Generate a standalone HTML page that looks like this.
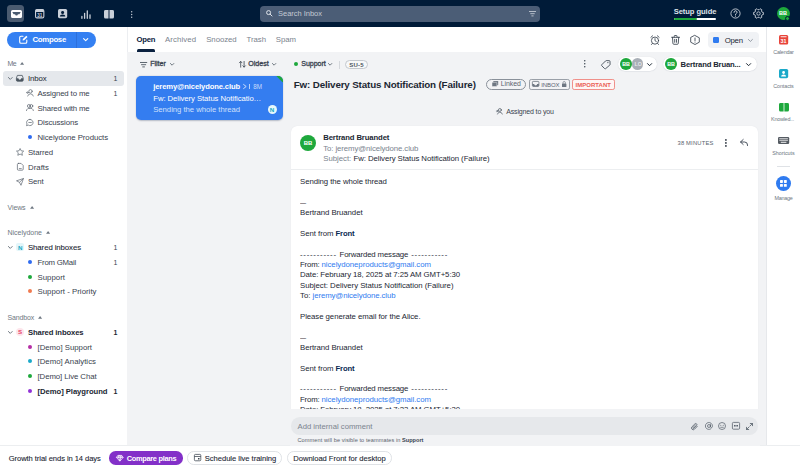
<!DOCTYPE html>
<html><head><meta charset="utf-8"><title>Front</title>
<style>
*{box-sizing:border-box;margin:0;padding:0}
html,body{width:800px;height:470px;overflow:hidden;background:#fff}
body{font-family:"Liberation Sans",sans-serif;color:#1c2733;position:relative;font-size:8.4px}
.a{position:absolute}
.t{position:absolute;white-space:nowrap;line-height:1;z-index:5}
svg{position:absolute;overflow:visible}
.dot{position:absolute;width:4.2px;height:4.2px;border-radius:50%}
.pill{position:absolute;border-radius:10px}

</style></head><body>
<!-- panels -->
<div class="a" style="left:0;top:0;width:800px;height:27px;background:#001b38"></div>
<div class="a" style="left:127px;top:27px;width:640px;height:419px;background:#f2f3f5"></div>
<div class="a" style="left:127px;top:27px;width:640px;height:24.700px;background:#fff;border-left:.8px solid #eceef1"></div>
<div class="a" style="left:766px;top:27px;width:1px;height:419px;background:#e6e8eb"></div>
<div class="a" style="left:767px;top:27px;width:33px;height:419px;background:#fff"></div>
<div class="a" style="left:0;top:445px;width:800px;height:25px;background:#fff;border-top:1px solid #eceef0"></div>

<!-- top bar -->
<div class="a" style="left:7px;top:5.3px;width:17px;height:17px;border-radius:3.5px;background:#4a5b70"></div>
<svg style="left:10.5px;top:10px" width="11" height="8" viewBox="0 0 11 8"><path d="M1.6 0h7.8a1.6 1.6 0 0 1 1.6 1.6v4.8A1.6 1.6 0 0 1 9.4 8H1.6A1.6 1.6 0 0 1 0 6.400V1.6A1.6 1.6 0 0 1 1.600 0z" fill="#fff"/><path d="M1.300 1.900h8.400l-1.300 2.300H6.900a1.400 1.400 0 0 1-2.800 0H2.600z" fill="#4a5b70"/></svg>
<svg style="left:34.700px;top:9.200px" width="9.400" height="9.400" viewBox="0 0 9.400 9.400"><rect x=".55" y=".55" width="8.300" height="8.300" rx="1.400" fill="none" stroke="#c9d0d9" stroke-width="1.100"/><path d="M.55 3V2A1.400 1.400 0 0 1 1.950.55H7.450A1.400 1.400 0 0 1 8.850 2V3z" fill="#c9d0d9"/><text x="4.700" y="7.700" font-family="Liberation Sans, sans-serif" font-size="4.600" font-weight="bold" fill="#c9d0d9" text-anchor="middle">31</text></svg>
<svg style="left:57.8px;top:9.3px" width="9.2" height="9.2" viewBox="0 0 9.2 9.2"><rect width="9.200" height="9.200" rx="1.600" fill="#c9d0d9"/><circle cx="4.600" cy="3.500" r="1.500" fill="#001b38"/><path d="M1.900 7.600a2.700 2.200 0 0 1 5.400 0z" fill="#001b38"/></svg>
<svg style="left:81px;top:9.5px" width="10" height="9" viewBox="0 0 10 9"><g stroke="#c9d0d9" stroke-width="1.300" stroke-linecap="round"><path d="M.9 6.500v1.800M3.600 3.300v5M6.300.8v7.500M9 4.800v3.500"/></g></svg>
<svg style="left:104px;top:9.700px" width="10" height="8.400" viewBox="0 0 10 8.400"><path d="M0 1.500A1.500 1.500 0 0 1 1.500 0H4.500V8.400H1.500A1.500 1.500 0 0 1 0 6.900z" fill="#c9d0d9"/><path d="M5.500 0H8.500A1.500 1.500 0 0 1 10 1.500V6.900A1.500 1.500 0 0 1 8.500 8.400H5.500z" fill="#c9d0d9"/></svg>
<svg style="left:131.400px;top:10.600px" width="1.400" height="7" viewBox="0 0 1.400 7"><circle cx=".7" cy=".7" r=".7" fill="#c9d0d9"/><circle cx=".7" cy="3.500" r=".7" fill="#c9d0d9"/><circle cx=".7" cy="6.300" r=".7" fill="#c9d0d9"/></svg>
<!-- search -->
<div class="a" style="left:259.5px;top:5.500px;width:280.5px;height:16.500px;border-radius:4px;background:#4b5d76"></div>
<svg style="left:266.300px;top:10.400px" width="6.400" height="6.400" viewBox="0 0 6.400 6.400"><circle cx="2.600" cy="2.600" r="2" fill="none" stroke="#dfe4ea" stroke-width="1"/><path d="M4.100 4.100L6 6" stroke="#dfe4ea" stroke-width="1" stroke-linecap="round"/></svg>
<svg style="left:528.500px;top:11px" width="7" height="5.400" viewBox="0 0 7 5.400"><g stroke="#c3cad4" stroke-width=".9" stroke-linecap="round"><path d="M.4.500h6.200M1.700 2.700h3.600M2.800 4.900h1.400"/></g></svg>
<!-- setup guide bar -->
<div class="a" style="left:673.700px;top:18.100px;width:42.700px;height:2.100px;border-radius:1px;background:#fff"></div>
<div class="a" style="left:673.700px;top:18.100px;width:23.500px;height:2.100px;border-radius:1px;background:#1eaa3c"></div>
<svg style="left:729.900px;top:8.100px" width="11" height="11" viewBox="0 0 11 11"><circle cx="5.500" cy="5.500" r="4.600" fill="none" stroke="#c9d0d9" stroke-width=".9"/><path d="M4 4.300a1.500 1.500 0 1 1 2.200 1.300c-.5.300-.7.600-.7 1.100" fill="none" stroke="#dfe4ea" stroke-width=".9" stroke-linecap="round"/><circle cx="5.500" cy="8.100" r=".55" fill="#dfe4ea"/></svg>
<svg style="left:753.300px;top:8px" width="11" height="11" viewBox="0 0 11 11"><path d="M9.03 4.10L10.39 4.46L10.39 6.54L9.03 6.90L8.48 7.86L8.85 9.22L7.05 10.26L6.06 9.26L4.94 9.26L3.95 10.26L2.15 9.22L2.52 7.86L1.97 6.90L0.61 6.54L0.61 4.46L1.97 4.10L2.52 3.14L2.15 1.78L3.95 0.74L4.94 1.74L6.06 1.74L7.05 0.74L8.85 1.78L8.48 3.14z" fill="none" stroke="#c9d0d9" stroke-width=".9" stroke-linejoin="round"/><circle cx="5.500" cy="5.500" r="1.700" fill="none" stroke="#c9d0d9" stroke-width=".85"/></svg>
<div class="a" style="left:776.800px;top:6.600px;width:13px;height:13px;border-radius:50%;background:#1eaa3c"></div>
<div class="a" style="left:785.200px;top:15.900px;width:5.200px;height:5.200px;border-radius:50%;background:#1eaa3c;border:1px solid #001b38;z-index:6"></div>

<!-- compose -->
<div class="a" style="left:7px;top:32px;width:89.300px;height:15.500px;border-radius:8px;background:#3480f2"></div>
<div class="a" style="left:76px;top:32px;width:.6px;height:15.500px;background:#2d70dc"></div>
<svg style="left:19.300px;top:35.300px" width="9" height="9" viewBox="0 0 9 9"><path d="M4 1.200H2A1.300 1.300 0 0 0 .7 2.500V7A1.300 1.300 0 0 0 2 8.300H6.500A1.300 1.300 0 0 0 7.800 7V5" fill="none" stroke="#fff" stroke-width="1.100" stroke-linecap="round"/><path d="M3.600 5.600l.3-1.500L7.300.7l1.200 1.200L5.100 5.300z" fill="#fff"/></svg>
<svg style="left:83px;top:38.200px" width="5.400" height="3.400" viewBox="0 0 5.400 3.400"><path d="M.6.600l2.100 2.100L4.800.6" fill="none" stroke="#fff" stroke-width="1.100" stroke-linecap="round" stroke-linejoin="round"/></svg>
<!-- sidebar -->
<div class="a" style="left:2.500px;top:71px;width:121.500px;height:14.500px;border-radius:3px;background:#e5e8ec"></div>
<svg style="left:8px;top:76.800px" width="4.600" height="3" viewBox="0 0 4.600 3"><path d="M.4.500l1.900 1.900L4.200.5" fill="none" stroke="#4a5560" stroke-width=".8" stroke-linecap="round" stroke-linejoin="round"/></svg>
<svg style="left:8px;top:245.800px" width="4.600" height="3" viewBox="0 0 4.600 3"><path d="M.4.500l1.900 1.900L4.200.5" fill="none" stroke="#4a5560" stroke-width=".8" stroke-linecap="round" stroke-linejoin="round"/></svg>
<svg style="left:8px;top:330.500px" width="4.600" height="3" viewBox="0 0 4.600 3"><path d="M.4.500l1.900 1.900L4.200.5" fill="none" stroke="#4a5560" stroke-width=".8" stroke-linecap="round" stroke-linejoin="round"/></svg>
<!-- inbox tray icon -->
<svg style="left:16.300px;top:75px" width="7.600" height="6.600" viewBox="0 0 7.600 6.600"><path d="M1.400.4h4.800l1 2.700v2.100a1 1 0 0 1-1 1H1.400a1 1 0 0 1-1-1V3.100z" fill="none" stroke="#4a5560" stroke-width=".8" stroke-linejoin="round"/><path d="M.4 3.300h2a1.400 1.400 0 0 0 2.800 0h2v2a1 1 0 0 1-1 1H1.400a1 1 0 0 1-1-1z" fill="#4a5560"/></svg>
<!-- assigned icon -->
<svg style="left:25.800px;top:89.300px" width="7.600" height="7.400" viewBox="0 0 7.600 7.400"><g fill="none" stroke="#5a636e" stroke-width=".7" stroke-linecap="round" stroke-linejoin="round"><circle cx="4.500" cy="2.300" r="1.700"/><path d="M1.700 7a2.900 2.900 0 0 1 5.600 0M.4 3.600h2M1.600 2.700l.9.900-.9.900"/></g></svg>
<!-- shared icon -->
<svg style="left:25.800px;top:104.300px" width="7.800" height="7" viewBox="0 0 7.800 7"><g fill="none" stroke="#5a636e" stroke-width=".7" stroke-linecap="round" stroke-linejoin="round"><circle cx="2.900" cy="2" r="1.500"/><circle cx="5.300" cy="2" r="1.500"/><path d="M.4 6.600a2.500 2.500 0 0 1 3.500-2.200M7.400 6.600a2.500 2.500 0 0 0-3.500-2.200"/></g></svg>
<!-- discussions -->
<svg style="left:25.800px;top:119px" width="7.600" height="7.200" viewBox="0 0 7.600 7.200"><g fill="none" stroke="#5a636e" stroke-width=".7" stroke-linecap="round" stroke-linejoin="round"><path d="M4 .4a3.100 3.100 0 1 1-1.700 5.700L.5 6.700l.5-1.700A3.100 3.100 0 0 1 4 .4z"/><path d="M2.800 3.500h2.600"/></g></svg>
<div class="dot" style="left:27.500px;top:135px;background:#2f6bf0"></div>
<!-- star -->
<svg style="left:15.800px;top:147.800px" width="8.200" height="8" viewBox="0 0 8.200 8"><path d="M4.100.5l1.100 2.300 2.500.3-1.800 1.700.5 2.500-2.300-1.200-2.300 1.200.5-2.500L.5 3.100l2.500-.3z" fill="none" stroke="#5a636e" stroke-width=".7" stroke-linejoin="round"/></svg>
<!-- drafts -->
<svg style="left:16.500px;top:163px" width="6.600" height="7.600" viewBox="0 0 6.600 7.600"><g fill="none" stroke="#5a636e" stroke-width=".7" stroke-linejoin="round" stroke-linecap="round"><path d="M1.400.4h2.700l2.100 2.100v3.700a1 1 0 0 1-1 1H1.400a1 1 0 0 1-1-1V1.400a1 1 0 0 1 1-1z"/><path d="M2.300 5.600h2"/></g></svg>
<!-- sent -->
<svg style="left:15.800px;top:177.800px" width="8" height="7.800" viewBox="0 0 8 7.800"><path d="M.5 2.800L7.500.5 5 7.300 3.500 4.300zM3.500 4.300L7.500.5" fill="none" stroke="#5a636e" stroke-width=".7" stroke-linejoin="round"/></svg>
<!-- section carets -->
<svg style="left:19.8px;top:62.2px" width="4.200" height="2.700" viewBox="0 0 3.600 2.400"><path d="M0 2.400L1.800 0l1.800 2.400z" fill="#6e7782"/></svg>
<svg style="left:29.8px;top:205.9px" width="4.200" height="2.700" viewBox="0 0 3.600 2.400"><path d="M0 2.400L1.800 0l1.800 2.400z" fill="#6e7782"/></svg>
<svg style="left:45.8px;top:231.2px" width="4.200" height="2.700" viewBox="0 0 3.600 2.400"><path d="M0 2.400L1.800 0l1.800 2.400z" fill="#6e7782"/></svg>
<svg style="left:37.8px;top:315.9px" width="4.200" height="2.700" viewBox="0 0 3.600 2.400"><path d="M0 2.400L1.800 0l1.800 2.400z" fill="#6e7782"/></svg>
<!-- N / S badges -->
<div class="a" style="left:16px;top:243.300px;width:8px;height:8px;border-radius:2px;background:#e3f6fa"></div>
<div class="a" style="left:16px;top:328px;width:8px;height:8px;border-radius:50%;background:#fde6ec"></div>
<!-- dots -->
<div class="dot" style="left:27.500px;top:259.700px;background:#2f6bf0"></div>
<div class="dot" style="left:27.500px;top:274.500px;background:#1ea83c"></div>
<div class="dot" style="left:27.500px;top:289.200px;background:#f07a50"></div>
<div class="dot" style="left:27.500px;top:344.500px;background:#b52fa5"></div>
<div class="dot" style="left:27.500px;top:359.200px;background:#1ba9c9"></div>
<div class="dot" style="left:27.500px;top:373.900px;background:#1ea83c"></div>
<div class="dot" style="left:27.500px;top:388.700px;background:#9232d6"></div>

<!-- tabs -->
<div class="a" style="left:136.500px;top:49.300px;width:18.800px;height:2.400px;border-radius:1.500px 1.500px 0 0;background:#0b2140"></div>
<!-- alarm -->
<svg style="left:650px;top:35px" width="10" height="10" viewBox="0 0 10 10"><g fill="none" stroke="#38424e" stroke-width=".85" stroke-linecap="round" stroke-linejoin="round"><circle cx="5" cy="5.600" r="3.600"/><path d="M5 3.600v2.100l1.300.8M.9 2.300L2.600.8M9.100 2.300L7.400.8M2.300 8.600l-.8.900M7.700 8.600l.8.900"/></g></svg>
<!-- trash -->
<svg style="left:671px;top:34.800px" width="9.200" height="9.800" viewBox="0 0 9.200 9.800"><g fill="none" stroke="#38424e" stroke-width=".85" stroke-linecap="round" stroke-linejoin="round"><path d="M.6 2.300h8M3.200 2.300V1.100a.6.600 0 0 1 .6-.6h1.600a.6.600 0 0 1 .6.600v1.200M1.500 2.300l.4 6a1 1 0 0 0 1 1h3.400a1 1 0 0 0 1-1l.4-6M3.700 4.300v3M5.500 4.300v3"/></g></svg>
<!-- hex ! -->
<svg style="left:690.400px;top:34.800px" width="10" height="10" viewBox="0 0 10 10"><g fill="none" stroke="#38424e" stroke-width=".85" stroke-linecap="round" stroke-linejoin="round"><path d="M5 .5l4.300 2.300v4.400L5 9.500.7 7.200V2.800z"/><path d="M5 3v2.600"/></g><circle cx="5" cy="7" r=".55" fill="#38424e"/></svg>
<!-- open button -->
<div class="a" style="left:707.500px;top:32px;width:51.500px;height:15.600px;border-radius:4px;background:#f0f2f5"></div>
<div class="a" style="left:712.800px;top:36.800px;width:6.200px;height:6.200px;border-radius:1.200px;background:#2f7bf0"></div>
<svg style="left:748.300px;top:38.600px" width="4.800" height="3" viewBox="0 0 4.800 3"><path d="M.4.500l2 1.900 2-1.900" fill="none" stroke="#7a838e" stroke-width=".8" stroke-linecap="round" stroke-linejoin="round"/></svg>

<!-- list header -->
<svg style="left:140px;top:61.800px" width="7.200" height="5.400" viewBox="0 0 7.200 5.400"><g stroke="#38424e" stroke-width=".8" stroke-linecap="round"><path d="M.4.500h6.400M1.500 2.700h4.200M2.700 4.900h1.800"/></g></svg>
<svg style="left:170px;top:63.200px" width="4.200" height="2.800" viewBox="0 0 4.200 2.800"><path d="M.4.500l1.700 1.700L3.800.5" fill="none" stroke="#4a5560" stroke-width=".8" stroke-linecap="round" stroke-linejoin="round"/></svg>
<svg style="left:238.600px;top:61.200px" width="6.800" height="6.600" viewBox="0 0 6.800 6.600"><g fill="none" stroke="#38424e" stroke-width=".8" stroke-linecap="round" stroke-linejoin="round"><path d="M1.700 6.200V.5M.4 1.800L1.700.5 3 1.800M5.100.4v5.700M3.800 4.800l1.300 1.300 1.300-1.300"/></g></svg>
<svg style="left:272.400px;top:63.200px" width="4.200" height="2.800" viewBox="0 0 4.200 2.800"><path d="M.4.500l1.700 1.700L3.800.5" fill="none" stroke="#4a5560" stroke-width=".8" stroke-linecap="round" stroke-linejoin="round"/></svg>
<!-- card -->
<div class="a" style="left:135.600px;top:75.800px;width:147px;height:44px;border-radius:5px;background:#347df0;overflow:hidden;box-shadow:0 .5px 1.500px rgba(0,20,60,.25)"><div class="a" style="right:-4.500px;top:-4.500px;width:9px;height:9px;background:#1ea83c;transform:rotate(45deg) scale(1.050)"></div></div>
<svg style="left:242.600px;top:83.800px" width="4" height="5" viewBox="0 0 4 5"><path d="M.6.500l2.600 2-2.600 2" fill="none" stroke="#dbe8fd" stroke-width=".9" stroke-linecap="round" stroke-linejoin="round"/></svg>
<div class="a" style="left:249px;top:83.600px;width:.7px;height:5.400px;background:#b9d2fa"></div>
<div class="a" style="left:267.500px;top:105.300px;width:9px;height:9px;border-radius:50%;background:#e6f7fb"></div>

<!-- conv header -->
<div class="dot" style="left:293.600px;top:62.300px;width:4.200px;height:4.200px;background:#1ea83c"></div>
<svg style="left:328.200px;top:63.200px" width="4.200" height="2.800" viewBox="0 0 4.200 2.800"><path d="M.4.500l1.700 1.700L3.800.5" fill="none" stroke="#4a5560" stroke-width=".8" stroke-linecap="round" stroke-linejoin="round"/></svg>
<div class="a" style="left:338.500px;top:60.500px;width:.7px;height:8.300px;background:#d5d8dc"></div>
<div class="a" style="left:345px;top:60px;width:22.600px;height:9.300px;border-radius:5px;border:.7px solid #c3c8ce;background:#f7f8f9"></div>
<!-- chips -->
<div class="a" style="left:486.100px;top:78.600px;width:39.800px;height:11px;border-radius:5.500px;border:.7px solid #8a919a"></div>
<svg style="left:492px;top:81.300px" width="6.200" height="5.600" viewBox="0 0 6.200 5.600"><rect x="1.300" y="0" width="4.900" height="4.300" rx=".6" fill="#6e7782"/><rect x="0" y="1.300" width="4.900" height="4.300" rx=".6" fill="#6e7782" stroke="#f2f3f5" stroke-width=".5"/></svg>
<div class="a" style="left:529.300px;top:78.600px;width:40.500px;height:11px;border-radius:2.200px;border:.7px solid #9aa0a8"></div>
<svg style="left:532px;top:81.200px" width="7.300" height="5.800" viewBox="0 0 7.300 5.800"><rect x=".4" y=".4" width="6.500" height="5" rx=".8" fill="none" stroke="#6e7782" stroke-width=".8"/><path d="M.4 3h1.800a1.450 1.450 0 0 0 2.900 0h1.800v1.600a.8.8 0 0 1-.8.800H1.200a.8.800 0 0 1-.8-.8z" fill="#6e7782"/></svg>
<svg style="left:562px;top:80.800px" width="4.400" height="6" viewBox="0 0 4.400 6"><rect x="0" y="2.500" width="4.400" height="3.500" rx=".6" fill="#6e7782"/><path d="M1 2.700V1.700a1.200 1.200 0 0 1 2.400 0v1" fill="none" stroke="#6e7782" stroke-width=".7"/></svg>
<div class="a" style="left:572px;top:78.600px;width:42.700px;height:11px;border-radius:2.200px;border:.7px solid #f0908a;background:#fef6f5"></div>
<!-- dots / tag -->
<svg style="left:584.300px;top:60.300px" width="1.500" height="7.600" viewBox="0 0 1.500 7.600"><circle cx=".75" cy=".75" r=".75" fill="#38424e"/><circle cx=".75" cy="3.800" r=".75" fill="#38424e"/><circle cx=".75" cy="6.850" r=".75" fill="#38424e"/></svg>
<svg style="left:600.500px;top:59.800px" width="9.600" height="9.200" viewBox="0 0 9.600 9.200"><path d="M5.300.6l3.100.100a.6.600 0 0 1 .6.600l.1 3.100a1 1 0 0 1-.3.700L4.700 8.600a.8.800 0 0 1-1.100 0L.8 5.800a.8.800 0 0 1 0-1.100L4.600.9a1 1 0 0 1 .7-.3z" fill="none" stroke="#38424e" stroke-width=".85" stroke-linejoin="round"/><circle cx="6.900" cy="2.600" r=".6" fill="#38424e"/></svg>
<!-- assignee pills -->
<div class="a" style="left:618.300px;top:56.800px;width:38.800px;height:14.400px;border-radius:7.200px;background:#fff;box-shadow:0 .3px 1px rgba(0,20,60,.18)"></div>
<div class="a" style="left:631.500px;top:58.100px;width:11.800px;height:11.800px;border-radius:50%;background:#a9afb7"></div>
<div class="a" style="left:620px;top:58.100px;width:11.800px;height:11.800px;border-radius:50%;background:#1ea83c"></div>
<svg style="left:646.700px;top:62.600px" width="5.200" height="3.400" viewBox="0 0 5.200 3.400"><path d="M.5.600l2.100 2.100L4.700.6" fill="none" stroke="#1c2733" stroke-width="1" stroke-linecap="round" stroke-linejoin="round"/></svg>
<div class="a" style="left:663.300px;top:56.800px;width:94.200px;height:14.400px;border-radius:7.200px;background:#fff;box-shadow:0 .3px 1px rgba(0,20,60,.18)"></div>
<div class="a" style="left:665px;top:58.100px;width:11.800px;height:11.800px;border-radius:50%;background:#1ea83c"></div>
<svg style="left:746.400px;top:62.600px" width="5.200" height="3.400" viewBox="0 0 5.200 3.400"><path d="M.5.600l2.100 2.100L4.700.6" fill="none" stroke="#1c2733" stroke-width="1" stroke-linecap="round" stroke-linejoin="round"/></svg>
<!-- assigned to you icon -->
<svg style="left:496.200px;top:107.600px" width="6.600" height="6.400" viewBox="0 0 7.600 7.400"><g fill="none" stroke="#4a5560" stroke-width=".8" stroke-linecap="round" stroke-linejoin="round"><circle cx="4.500" cy="2.300" r="1.700"/><path d="M1.700 7a2.900 2.900 0 0 1 5.600 0M.4 3.600h2M1.600 2.700l.9.900-.9.900"/></g></svg>

<!-- message card -->
<div class="a" style="left:291.300px;top:126px;width:467px;height:282.800px;border-radius:6px 6px 0 0;background:#fff;box-shadow:0 .3px 1px rgba(0,20,60,.10)"></div>
<div class="a" style="left:291.300px;top:169.200px;width:466.900px;height:.7px;background:#eceef0"></div>
<div class="a" style="left:300px;top:134.600px;width:16px;height:16px;border-radius:50%;background:#1ea83c"></div>
<svg style="left:725.300px;top:138.900px" width="1.800" height="7.800" viewBox="0 0 1.800 7.800"><circle cx=".9" cy=".9" r=".9" fill="#2a333e"/><circle cx=".9" cy="3.900" r=".9" fill="#2a333e"/><circle cx=".9" cy="6.900" r=".9" fill="#2a333e"/></svg>
<svg style="left:739.800px;top:139.300px" width="8" height="7" viewBox="0 0 8 7"><path d="M3.200.5L.5 3l2.700 2.500M.7 3h3.800a3 3 0 0 1 3 3v.5" fill="none" stroke="#38424e" stroke-width=".9" stroke-linecap="round" stroke-linejoin="round"/></svg>
<!-- mask under card (clip last line) -->
<div class="a" style="left:290px;top:408.800px;width:470px;height:37px;background:#f2f3f5;z-index:7"></div>
<!-- composer -->
<div class="a" style="left:291.300px;top:417px;width:467.200px;height:17.500px;border-radius:8.750px;background:#e6e8eb;z-index:8"></div>
<svg style="left:691.200px;top:422.500px;z-index:9" width="7.200" height="7.400" viewBox="0 0 7.200 7.400"><path d="M6.300 3.300L3.500 6.200a1.700 1.700 0 0 1-2.500-2.400L3.900.9a1.150 1.150 0 0 1 1.700 1.600L2.800 5.300a.55.55 0 0 1-.8-.8l2.500-2.500" fill="none" stroke="#5a636e" stroke-width=".85" stroke-linecap="round"/></svg>
<svg style="left:704.500px;top:422px;z-index:9" width="8" height="8" viewBox="0 0 8 8"><g fill="none" stroke="#5a636e" stroke-width=".75" stroke-linecap="round"><circle cx="4" cy="4" r="1.500"/><path d="M5.500 2.600v2a.9.900 0 0 0 1.900-.1V4a3.500 3.500 0 1 0-1.400 2.800"/></g></svg>
<svg style="left:718.200px;top:422px;z-index:9" width="8" height="8" viewBox="0 0 8 8"><circle cx="4" cy="4" r="3.500" fill="none" stroke="#5a636e" stroke-width=".75"/><circle cx="2.800" cy="3.200" r=".5" fill="#5a636e"/><circle cx="5.200" cy="3.200" r=".5" fill="#5a636e"/><path d="M2.700 5.300h2.600" stroke="#5a636e" stroke-width=".7" stroke-linecap="round"/></svg>
<svg style="left:732px;top:422.200px;z-index:9" width="8" height="7.600" viewBox="0 0 8 7.600"><rect x=".4" y=".4" width="7.200" height="6.800" rx="1" fill="none" stroke="#5a636e" stroke-width=".8"/><path d="M2 3.800h4" stroke="#5a636e" stroke-width="1.400" stroke-dasharray="1.100 .35"/></svg>
<svg style="left:746.300px;top:422.600px;z-index:9" width="7" height="7" viewBox="0 0 7 7"><g fill="none" stroke="#5a636e" stroke-width=".85" stroke-linecap="round" stroke-linejoin="round"><path d="M4.300.5h2.200v2.200M6.500.5L4 3M2.700 6.500H.5V4.300M.5 6.500L3 4"/></g></svg>

<!-- bottom bar -->
<div class="a" style="left:109.300px;top:451.200px;width:74px;height:13.400px;border-radius:6.700px;background:#8330c8;z-index:8"></div>
<svg style="left:116.300px;top:454.600px;z-index:9" width="7.600" height="6.600" viewBox="0 0 7.600 6.600"><path d="M2 .4h3.600l1.600 2-3.400 3.800L.4 2.400zM.4 2.400h6.800M2.700 2.400l1.100 3.600 1.100-3.600M2 .4l.7 2L3.800.4l1.100 2 .7-2" fill="none" stroke="#fff" stroke-width=".75" stroke-linejoin="round"/></svg>
<div class="a" style="left:187.400px;top:451.200px;width:95px;height:13.400px;border-radius:6.700px;border:.8px solid #dfe2e6;background:#fff;z-index:8"></div>
<svg style="left:194.300px;top:454.200px;z-index:9" width="7.200" height="7.200" viewBox="0 0 7.200 7.200"><rect x=".4" y=".4" width="6.400" height="6.400" rx="1" fill="none" stroke="#38424e" stroke-width=".75"/><path d="M.4 2.500h6.400" stroke="#38424e" stroke-width=".75"/><rect x="4" y="4" width="1.500" height="1.500" fill="#38424e"/></svg>
<div class="a" style="left:286.700px;top:451.200px;width:105.600px;height:13.400px;border-radius:6.700px;border:.8px solid #dfe2e6;background:#fff;z-index:8"></div>

<!-- right rail -->
<svg style="left:779px;top:35px" width="9.200" height="9.500" viewBox="0 0 9.200 9.500"><rect width="9.200" height="9.500" rx="1.500" fill="#e8443a"/><rect x="1.600" y="1.200" width="6" height="1" rx=".3" fill="#fff" opacity=".9"/><text x="4.600" y="8" font-family="Liberation Sans, sans-serif" font-size="5.400" font-weight="bold" fill="#fff" text-anchor="middle">31</text></svg>
<svg style="left:779px;top:69px" width="9.200" height="9.200" viewBox="0 0 9.200 9.200"><rect width="9.200" height="9.200" rx="1.600" fill="#1ba9c9"/><circle cx="4.600" cy="3.500" r="1.400" fill="#fff"/><path d="M2.100 7.400a2.500 2 0 0 1 5 0z" fill="#fff"/></svg>
<svg style="left:778.600px;top:102.500px" width="10" height="8.600" viewBox="0 0 10 8.600"><path d="M0 1.500A1.500 1.500 0 0 1 1.500 0H4.600V8.600H1.500A1.500 1.500 0 0 1 0 7.100z" fill="#1ea83c"/><path d="M5.400 0H8.500A1.500 1.500 0 0 1 10 1.500V7.100A1.500 1.500 0 0 1 8.500 8.600H5.400z" fill="#1ea83c"/></svg>
<svg style="left:778px;top:137px" width="11.200" height="7" viewBox="0 0 11.200 7"><rect width="11.200" height="7" rx="1.200" fill="#555b62"/><g fill="#fff"><rect x="1.300" y="1.300" width="8.600" height="1" opacity=".85"/><rect x="1.300" y="3" width="8.600" height="1" opacity=".6"/><rect x="2.800" y="4.800" width="5.600" height="1" opacity=".9"/></g></svg>
<div class="a" style="left:777.400px;top:166px;width:12.400px;height:.7px;background:#dfe2e6"></div>
<div class="a" style="left:775.900px;top:175.700px;width:15.500px;height:15.500px;border-radius:50%;background:#2f7bf0"></div>
<svg style="left:780.300px;top:180.100px" width="6.800" height="6.800" viewBox="0 0 6.800 6.800"><g fill="#fff"><rect width="2.900" height="2.900" rx=".6"/><rect x="3.900" width="2.900" height="2.900" rx=".6"/><rect y="3.900" width="2.900" height="2.900" rx=".6"/><rect x="3.900" y="3.900" width="2.900" height="2.900" rx=".6"/></g></svg>

<span class="t" style="left:32.4px;top:36.40px;font-size:7.8px;font-weight:bold;color:#fff;letter-spacing:-0.276px;">Compose</span>
<span class="t" style="left:7.5px;top:60.20px;font-size:7px;color:#6e7782;letter-spacing:-0.500px;">Me</span>
<span class="t" style="left:28px;top:75.00px;font-size:7.8px;color:#1c2733;letter-spacing:-0.116px;">Inbox</span>
<span class="t" style="right:682.50px;top:75.40px;font-size:7px;color:#38424e;">1</span>
<span class="t" style="left:37.5px;top:89.70px;font-size:7.8px;color:#38424e;letter-spacing:-0.125px;">Assigned to me</span>
<span class="t" style="right:682.50px;top:90.10px;font-size:7px;color:#38424e;">1</span>
<span class="t" style="left:37.5px;top:104.50px;font-size:7.8px;color:#38424e;letter-spacing:-0.155px;">Shared with me</span>
<span class="t" style="left:37.5px;top:119.20px;font-size:7.8px;color:#38424e;letter-spacing:-0.101px;">Discussions</span>
<span class="t" style="left:37.5px;top:134.00px;font-size:7.8px;color:#38424e;letter-spacing:-0.053px;">Nicelydone Products</span>
<span class="t" style="left:28px;top:148.70px;font-size:7.8px;color:#38424e;letter-spacing:-0.083px;">Starred</span>
<span class="t" style="left:28px;top:163.50px;font-size:7.8px;color:#38424e;letter-spacing:0.034px;">Drafts</span>
<span class="t" style="left:28px;top:178.30px;font-size:7.8px;color:#38424e;letter-spacing:-0.137px;">Sent</span>
<span class="t" style="left:7.5px;top:203.90px;font-size:7px;color:#6e7782;letter-spacing:-0.109px;">Views</span>
<span class="t" style="left:7.5px;top:229.20px;font-size:7px;color:#6e7782;letter-spacing:-0.014px;">Nicelydone</span>
<span class="t" style="left:28px;top:244.00px;font-size:7.8px;color:#1c2733;letter-spacing:-0.085px;-webkit-text-stroke:0.1px #1c2733;">Shared inboxes</span>
<span class="t" style="right:682.50px;top:244.40px;font-size:7px;color:#38424e;">1</span>
<span class="t" style="left:37.5px;top:258.70px;font-size:7.8px;color:#38424e;letter-spacing:-0.222px;">From GMail</span>
<span class="t" style="right:682.50px;top:259.10px;font-size:7px;color:#38424e;">1</span>
<span class="t" style="left:37.5px;top:273.50px;font-size:7.8px;color:#38424e;letter-spacing:0.027px;">Support</span>
<span class="t" style="left:37.5px;top:288.20px;font-size:7.8px;color:#38424e;letter-spacing:0.028px;">Support - Priority</span>
<span class="t" style="left:7.5px;top:314.00px;font-size:7px;color:#6e7782;letter-spacing:-0.163px;">Sandbox</span>
<span class="t" style="left:28px;top:328.75px;font-size:7.7px;font-weight:bold;color:#1c2733;letter-spacing:-0.125px;">Shared inboxes</span>
<span class="t" style="right:682.50px;top:329.10px;font-size:7px;font-weight:bold;color:#1c2733;">1</span>
<span class="t" style="left:37.5px;top:343.50px;font-size:7.8px;color:#38424e;letter-spacing:-0.008px;">[Demo] Support</span>
<span class="t" style="left:37.5px;top:358.20px;font-size:7.8px;color:#38424e;letter-spacing:0.026px;">[Demo] Analytics</span>
<span class="t" style="left:37.5px;top:372.90px;font-size:7.8px;color:#38424e;letter-spacing:-0.078px;">[Demo] Live Chat</span>
<span class="t" style="left:37.5px;top:387.75px;font-size:7.7px;font-weight:bold;color:#1c2733;letter-spacing:-0.053px;">[Demo] Playground</span>
<span class="t" style="right:682.50px;top:388.10px;font-size:7px;font-weight:bold;color:#1c2733;">1</span>
<span class="t" style="left:17.9px;top:244.70px;font-size:6.2px;font-weight:bold;color:#17a8c4;letter-spacing:-0.169px;">N</span>
<span class="t" style="left:18px;top:329.40px;font-size:6.2px;font-weight:bold;color:#e8476a;letter-spacing:-0.141px;">S</span>
<span class="t" style="left:278px;top:10.45px;font-size:7.5px;color:#c3cad4;letter-spacing:-0.017px;">Search Inbox</span>
<span class="t" style="left:673.7px;top:8.20px;font-size:7.6px;font-weight:bold;color:#dfe4ea;letter-spacing:-0.068px;">Setup guide</span>
<span class="t" style="left:779px;top:11.00px;font-size:5.6px;font-weight:bold;color:#fff;letter-spacing:-0.047px;">BB</span>
<span class="t" style="left:136.5px;top:36.35px;font-size:7.7px;font-weight:bold;color:#0b2140;letter-spacing:-0.227px;">Open</span>
<span class="t" style="left:165px;top:36.30px;font-size:7.8px;color:#7a838e;letter-spacing:0.113px;">Archived</span>
<span class="t" style="left:206.25px;top:36.30px;font-size:7.8px;color:#7a838e;letter-spacing:-0.076px;">Snoozed</span>
<span class="t" style="left:246.5px;top:36.30px;font-size:7.8px;color:#7a838e;letter-spacing:-0.028px;">Trash</span>
<span class="t" style="left:275.75px;top:36.30px;font-size:7.8px;color:#7a838e;letter-spacing:-0.031px;">Spam</span>
<span class="t" style="left:724.75px;top:36.60px;font-size:7.8px;color:#1c2733;letter-spacing:-0.270px;">Open</span>
<span class="t" style="left:150.25px;top:61.45px;font-size:7.1px;color:#38424e;letter-spacing:-0.044px;-webkit-text-stroke:0.3px #38424e;">Filter</span>
<span class="t" style="left:248.25px;top:61.45px;font-size:7.1px;color:#38424e;letter-spacing:-0.003px;-webkit-text-stroke:0.3px #38424e;">Oldest</span>
<span class="t" style="left:153.25px;top:83.00px;font-size:7.6px;font-weight:bold;color:#fff;letter-spacing:-0.115px;">jeremy@nicelydone.club</span>
<span class="t" style="left:253.25px;top:83.95px;font-size:6.3px;color:#c9dcfb;letter-spacing:0.000px;">8M</span>
<span class="t" style="left:153.25px;top:94.75px;font-size:7.7px;color:#fff;letter-spacing:-0.056px;">Fw: Delivery Status Notificatio…</span>
<span class="t" style="left:153.25px;top:105.75px;font-size:7.7px;color:#cfe0fc;letter-spacing:-0.019px;">Sending the whole thread</span>
<span class="t" style="left:269.8px;top:107.10px;font-size:6.2px;font-weight:bold;color:#17a8c4;letter-spacing:-0.069px;">N</span>
<span class="t" style="left:301.25px;top:61.45px;font-size:7.1px;color:#38424e;letter-spacing:-0.051px;-webkit-text-stroke:0.3px #38424e;">Support</span>
<span class="t" style="left:349.25px;top:62.20px;font-size:6px;font-weight:bold;color:#4a5560;letter-spacing:0.207px;">SU-5</span>
<span class="t" style="left:293.75px;top:79.90px;font-size:9.8px;font-weight:bold;color:#1c2733;letter-spacing:-0.151px;">Fw: Delivery Status Notification (Failure)</span>
<span class="t" style="left:500.75px;top:81.25px;font-size:6.9px;color:#5a636e;letter-spacing:-0.052px;">Linked</span>
<span class="t" style="left:541.25px;top:81.80px;font-size:6px;color:#5a636e;letter-spacing:-0.084px;">INBOX</span>
<span class="t" style="left:575.5px;top:81.80px;font-size:6px;font-weight:bold;color:#ea5f56;letter-spacing:0.031px;">IMPORTANT</span>
<span class="t" style="left:622.2px;top:62.10px;font-size:5.4px;font-weight:bold;color:#fff;letter-spacing:-0.098px;">BB</span>
<span class="t" style="left:634.5px;top:62.10px;font-size:5.4px;font-weight:bold;color:#e4e6e9;letter-spacing:-0.150px;">LO</span>
<span class="t" style="left:667.2px;top:62.10px;font-size:5.4px;font-weight:bold;color:#fff;letter-spacing:-0.098px;">BB</span>
<span class="t" style="left:680.5px;top:60.95px;font-size:7.7px;font-weight:bold;color:#1c2733;letter-spacing:-0.165px;">Bertrand Bruan...</span>
<span class="t" style="left:506.25px;top:107.90px;font-size:7px;color:#38424e;letter-spacing:-0.154px;">Assigned to you</span>
<span class="t" style="left:303.8px;top:140.20px;font-size:6px;font-weight:bold;color:#fff;letter-spacing:-0.136px;">BB</span>
<span class="t" style="left:323.25px;top:134.25px;font-size:7.7px;font-weight:bold;color:#1c2733;letter-spacing:-0.113px;">Bertrand Bruandet</span>
<span class="t" style="left:323.25px;top:144.70px;font-size:7.8px;color:#7a838e;letter-spacing:-0.101px;">To: jeremy@nicelydone.club</span>
<span class="t" style="left:323.25px;top:155.40px;font-size:7.8px;color:#7a838e;letter-spacing:-0.023px;">Subject:</span>
<span class="t" style="left:353.5px;top:155.40px;font-size:7.8px;color:#1c2733;letter-spacing:-0.074px;">Fw: Delivery Status Notification (Failure)</span>
<span class="t" style="left:677.5px;top:140.80px;font-size:5.8px;color:#5a636e;letter-spacing:0.184px;">38 MINUTES</span>
<span class="t" style="left:300px;top:178.20px;font-size:7.8px;color:#1c2733;letter-spacing:-0.070px;">Sending the whole thread</span>
<span class="t" style="left:300px;top:198.92px;font-size:7.8px;color:#1c2733;transform:scaleX(.78);transform-origin:left center;">—</span>
<span class="t" style="left:300px;top:209.28px;font-size:7.8px;color:#1c2733;letter-spacing:-0.072px;">Bertrand Bruandet</span>
<span class="t" style="left:300px;top:230.00px;font-size:7.8px;color:#1c2733;letter-spacing:-0.035px;">Sent from</span>
<span class="t" style="left:335.5px;top:230.05px;font-size:7.7px;font-weight:bold;color:#0b2a52;letter-spacing:-0.128px;">Front</span>
<span class="t" style="left:300px;top:250.72px;font-size:7.8px;color:#1c2733;letter-spacing:0.744px;">-----------</span>
<span class="t" style="left:339.5px;top:250.72px;font-size:7.8px;color:#1c2733;letter-spacing:-0.137px;">Forwarded message</span>
<span class="t" style="left:411.25px;top:250.72px;font-size:7.8px;color:#1c2733;letter-spacing:0.744px;">-----------</span>
<span class="t" style="left:300px;top:261.08px;font-size:7.8px;color:#1c2733;letter-spacing:-0.172px;">From:</span>
<span class="t" style="left:321.5px;top:261.08px;font-size:7.8px;color:#2f7bf0;letter-spacing:-0.041px;">nicelydoneproducts@gmail.com</span>
<span class="t" style="left:300px;top:271.44px;font-size:7.8px;color:#1c2733;letter-spacing:-0.074px;">Date: February 18, 2025 at 7:25 AM GMT+5:30</span>
<span class="t" style="left:300px;top:281.80px;font-size:7.8px;color:#1c2733;letter-spacing:-0.026px;">Subject: Delivery Status Notification (Failure)</span>
<span class="t" style="left:300px;top:292.16px;font-size:7.8px;color:#1c2733;letter-spacing:0.031px;">To:</span>
<span class="t" style="left:312.5px;top:292.16px;font-size:7.8px;color:#2f7bf0;letter-spacing:-0.094px;">jeremy@nicelydone.club</span>
<span class="t" style="left:300px;top:312.88px;font-size:7.8px;color:#1c2733;letter-spacing:-0.060px;">Please generate email for the Alice.</span>
<span class="t" style="left:300px;top:333.60px;font-size:7.8px;color:#1c2733;transform:scaleX(.78);transform-origin:left center;">—</span>
<span class="t" style="left:300px;top:343.96px;font-size:7.8px;color:#1c2733;letter-spacing:-0.072px;">Bertrand Bruandet</span>
<span class="t" style="left:300px;top:364.68px;font-size:7.8px;color:#1c2733;letter-spacing:-0.035px;">Sent from</span>
<span class="t" style="left:335.5px;top:364.73px;font-size:7.7px;font-weight:bold;color:#0b2a52;letter-spacing:-0.128px;">Front</span>
<span class="t" style="left:300px;top:385.40px;font-size:7.8px;color:#1c2733;letter-spacing:0.744px;">-----------</span>
<span class="t" style="left:339.5px;top:385.40px;font-size:7.8px;color:#1c2733;letter-spacing:-0.137px;">Forwarded message</span>
<span class="t" style="left:411.25px;top:385.40px;font-size:7.8px;color:#1c2733;letter-spacing:0.744px;">-----------</span>
<span class="t" style="left:300px;top:395.76px;font-size:7.8px;color:#1c2733;letter-spacing:-0.172px;">From:</span>
<span class="t" style="left:321.5px;top:395.76px;font-size:7.8px;color:#2f7bf0;letter-spacing:-0.041px;">nicelydoneproducts@gmail.com</span>
<span class="t" style="left:300px;top:406.12px;font-size:7.8px;color:#1c2733;letter-spacing:-0.074px;">Date: February 18, 2025 at 7:23 AM GMT+5:30</span>
<span class="t" style="left:297.5px;top:422.75px;font-size:7.7px;color:#7a838e;letter-spacing:0.011px;z-index:9;">Add internal comment</span>
<span class="t" style="left:297.5px;top:437.60px;font-size:5.6px;color:#5a636e;letter-spacing:0.082px;z-index:9;">Comment will be visible to teammates in</span>
<span class="t" style="left:402px;top:437.60px;font-size:5.6px;font-weight:bold;color:#38424e;letter-spacing:0.007px;z-index:9;">Support</span>
<span class="t" style="left:8.75px;top:454.60px;font-size:7.6px;color:#1c2733;letter-spacing:-0.076px;z-index:9;-webkit-text-stroke:0.1px #1c2733;">Growth trial ends in 14 days</span>
<span class="t" style="left:126.75px;top:454.70px;font-size:7.4px;font-weight:bold;color:#fff;letter-spacing:-0.300px;z-index:9;">Compare plans</span>
<span class="t" style="left:204.75px;top:454.60px;font-size:7.6px;color:#1c2733;letter-spacing:-0.031px;z-index:9;-webkit-text-stroke:0.1px #1c2733;">Schedule live training</span>
<span class="t" style="left:293.3px;top:454.60px;font-size:7.6px;color:#1c2733;letter-spacing:-0.034px;z-index:9;-webkit-text-stroke:0.1px #1c2733;">Download Front for desktop</span>
<span class="t" style="left:773.3px;top:50.00px;font-size:5.4px;color:#6e7782;letter-spacing:-0.186px;">Calendar</span>
<span class="t" style="left:773.3px;top:83.60px;font-size:5.4px;color:#6e7782;letter-spacing:-0.110px;">Contacts</span>
<span class="t" style="left:771px;top:117.30px;font-size:5.4px;color:#6e7782;letter-spacing:-0.217px;">Knowled...</span>
<span class="t" style="left:772.3px;top:150.90px;font-size:5.4px;color:#6e7782;letter-spacing:-0.042px;">Shortcuts</span>
<span class="t" style="left:774.5px;top:196.00px;font-size:5.4px;color:#6e7782;letter-spacing:-0.247px;">Manage</span>
</body></html>
